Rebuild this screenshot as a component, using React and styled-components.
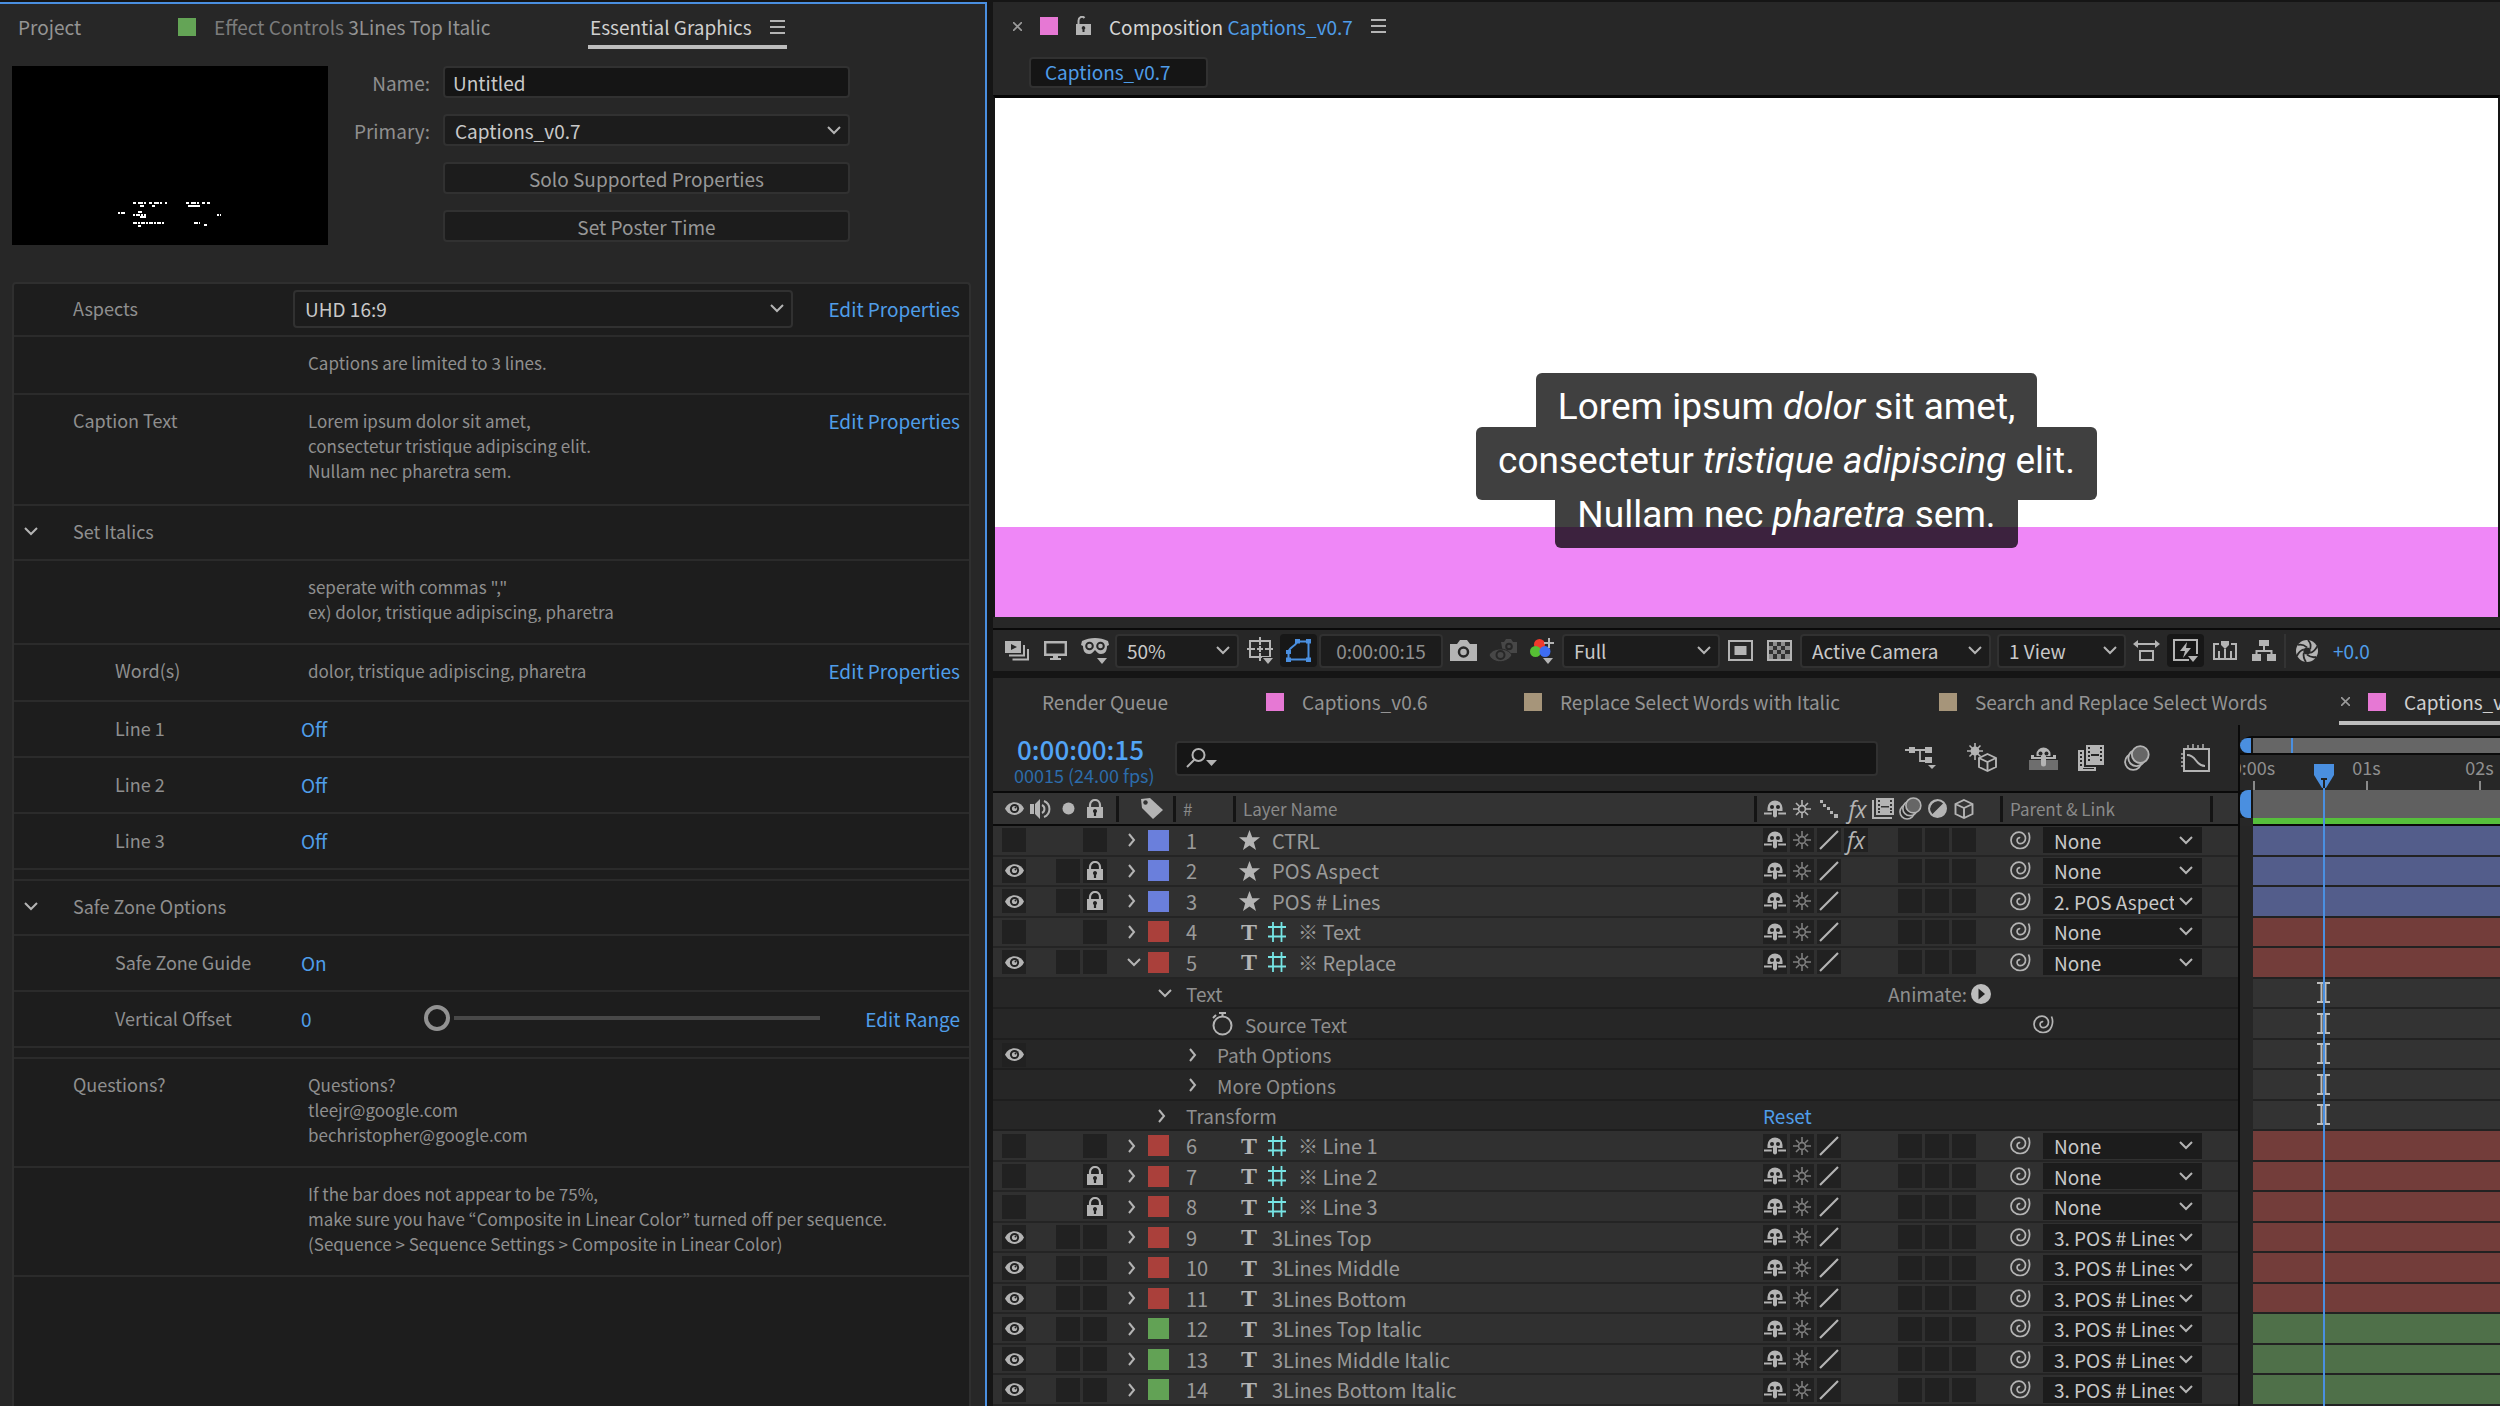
import React from "react";
import styled, { createGlobalStyle, css } from "styled-components";

const GlobalStyle = createGlobalStyle`
  * {
    box-sizing: border-box;
  }
  body {
    margin: 0;
    background: #151515;
    color: #8f8f8f;
    overflow: hidden;
  }
  body, button, input, select {
    font-family: "Noto Sans CJK JP", "Noto Sans", sans-serif;
    font-size: 19px;
    line-height: 25px;
  }
  button {
    padding: 0;
    border: 0;
    background: none;
    color: inherit;
    cursor: pointer;
  }
  svg {
    display: block;
    flex: none;
  }
`;

/* ---------- layout ---------- */

const Workspace = styled.main`
  display: grid;
  grid-template-columns: minmax(0, 987fr) minmax(0, 1507fr);
  column-gap: 6px;
  height: 100vh;
  padding-top: 2px;
`;

const RightColumn = styled.div`
  display: grid;
  grid-template-columns: minmax(0, 1fr);
  grid-template-rows: minmax(0, 669fr) minmax(0, 728fr);
  row-gap: 7px;
  min-width: 0;
  min-height: 0;
`;

const LeftPanel = styled.section`
  display: flex;
  flex-direction: column;
  min-height: 0;
  background: #272727;
  border-top: 2px solid #4a8fe0;
  border-right: 2px solid #4a8fe0;
`;

const Panel = styled.section`
  display: flex;
  flex-direction: column;
  min-width: 0;
  min-height: 0;
  background: #272727;
`;

/* ---------- shared bits ---------- */

const TabBar = styled.div`
  display: grid;
  grid-template-columns: ${({ $columns }) => $columns};
  flex: none;
  height: ${({ $height }) => $height}px;
  padding-left: ${({ $indent }) => $indent}px;
  overflow: hidden;
`;

const Tab = styled.button`
  display: flex;
  align-items: center;
  justify-self: start;
  gap: 18px;
  padding: ${({ $active }) => ($active ? "0 2px" : "0")};
  white-space: nowrap;
  color: ${({ $active }) => ($active ? "#d0d0d0" : "#949494")};
  box-shadow: ${({ $active }) => ($active ? "inset 0 -4px 0 #bdbdbd" : "none")};

  em {
    font-style: normal;
    color: #7c7c7c;
  }
`;

const Swatch = styled.span`
  flex: none;
  width: 18px;
  height: 18px;
  background: ${({ $color }) => $color};
`;

const LinkButton = styled.button`
  color: #4f9de9;
  white-space: nowrap;
`;

const boxed = css`
  background: #1c1c1c;
  border: 2px solid #313131;
  border-radius: 4px;
`;

const SelectWrap = styled.span`
  display: grid;
  align-items: center;
  width: ${({ $width }) => ($width ? `${$width}px` : "100%")};
  height: ${({ $height }) => $height || 34}px;
  color: #c9c9c9;

  select,
  svg {
    grid-area: 1 / 1;
  }
  svg {
    justify-self: end;
    margin-right: 9px;
    pointer-events: none;
  }
`;

const SelectBox = styled.select`
  appearance: none;
  width: 100%;
  height: 100%;
  padding: 0 28px 0 10px;
  color: #c9c9c9;
  ${boxed}
  ${({ $flat }) =>
    $flat &&
    css`
      border: 0;
      border-radius: 0;
      padding-left: 11px;
    `}
`;

const Select = ({ value, label, id, width, height, flat }) => (
  <SelectWrap $width={width} $height={height}>
    <SelectBox id={id} aria-label={label} $flat={flat} defaultValue={value}>
      <option>{value}</option>
    </SelectBox>
    <ChevronDown />
  </SelectWrap>
);

/* ---------- icons ---------- */

const ICON = "#b4b4b4";

const ChevronDown = () => (
  <svg width="14" height="9" viewBox="0 0 14 9" fill="none" stroke={ICON} strokeWidth="2">
    <path d="M1 1l6 6 6-6" />
  </svg>
);

const ChevronRight = () => (
  <svg width="8" height="14" viewBox="0 0 8 14" fill="none" stroke={ICON} strokeWidth="2">
    <path d="M1 1l5 6-5 6" />
  </svg>
);

const MenuIcon = () => (
  <svg width="15" height="14" viewBox="0 0 15 14" fill={ICON}>
    <path d="M0 0h15v2H0zM0 6h15v2H0zM0 12h15v2H0z" />
  </svg>
);

const CloseIcon = () => (
  <svg width="9" height="9" viewBox="0 0 9 9" stroke="#9a9a9a" strokeWidth="1.6">
    <path d="M0 0l9 9M9 0L0 9" />
  </svg>
);

const UnlockIcon = () => (
  <svg width="15" height="20" viewBox="0 0 15 20">
    <path d="M2.5 9V5a3.5 4 0 0 1 6-3" fill="none" stroke={ICON} strokeWidth="2" />
    <path d="M0 8h15v11H0z" fill={ICON} />
    <path d="M7.5 10a2 2 0 0 1 1 3.6V16h-2v-2.4a2 2 0 0 1 1-3.600z" fill="#272727" />
  </svg>
);

const LockIcon = () => (
  <svg width="16" height="20" viewBox="0 0 16 20">
    <path d="M3 9V6a5 5 0 0 1 10 0v3" fill="none" stroke={ICON} strokeWidth="2.2" />
    <path d="M0 8h16v11H0z" fill={ICON} />
    <path d="M8 10a2.2 2.2 0 0 1 1.1 4V17H6.9v-3A2.2 2.2 0 0 1 8 10z" fill="#222" />
  </svg>
);

const EyeIcon = () => (
  <svg width="19" height="13" viewBox="0 0 19 13">
    <path d="M0 6.5C4-2 15-2 19 6.500 15 15 4 15 0 6.500z" fill={ICON} />
    <circle cx="9.5" cy="6.5" r="4.6" fill="#222" />
    <circle cx="9.5" cy="6.5" r="2.6" fill={ICON} />
    <circle cx="10.5" cy="5.5" r="1" fill="#222" />
  </svg>
);

const SpeakerIcon = () => (
  <svg width="22" height="20" viewBox="0 0 22 20" fill="none" stroke={ICON} strokeWidth="2">
    <path d="M0 5h4v10H0zM5 5l5-5v20l-5-5z" fill={ICON} stroke="none" />
    <path d="M12 6a4.500 4.500 0 0 1 0 8M14 2a8.600 8.600 0 0 1 0 16" />
  </svg>
);

const DotIcon = () => (
  <svg width="13" height="13" viewBox="0 0 13 13">
    <circle cx="6.5" cy="6.5" r="6" fill={ICON} />
  </svg>
);

const TagIcon = () => (
  <svg width="22" height="21" viewBox="0 0 22 21">
    <path d="M0 1l9-1 13 12-10 9L1 10z" fill={ICON} />
    <circle cx="4.5" cy="4.5" r="2.2" fill="#333" />
  </svg>
);

const ShyIcon = () => (
  <svg width="22" height="18" viewBox="0 0 22 18">
    <path d="M3.5 11V8a7.5 7.5 0 0 1 15 0v3z" fill={ICON} />
    <circle cx="8" cy="7" r="2" fill="#222" />
    <circle cx="14" cy="7" r="2" fill="#222" />
    <path d="M0 12.500h8v2H0zM14 12.500h8v2h-8z" fill={ICON} />
    <path d="M9 9h4v6.500a2 2 0 0 1-4 0z" fill={ICON} />
    <path d="M8.300 10.500v5M13.700 10.500v5" stroke="#222" />
  </svg>
);

const SunIcon = ({ dim }) => (
  <svg width="18" height="18" viewBox="0 0 18 18" fill="none" stroke={dim ? "#7d7d7d" : ICON} strokeWidth="1.6">
    <circle cx="9" cy="9" r="3.4" />
    <path d="M9 0v5M9 13v5M0 9h5M13 9h5M3 3l3 3M12 12l3 3M15 3l-3 3M6 12l-3 3" />
  </svg>
);

const StairIcon = () => (
  <svg width="18" height="18" viewBox="0 0 18 18" fill={ICON}>
    <path d="M0 0h3v3H0zM3 4h3v3H3zM7 7h3v3H7zM10 11h3v3h-3zM14 14h4v4h-4z" />
  </svg>
);

const SlashIcon = () => (
  <svg width="20" height="20" viewBox="0 0 20 20" stroke={ICON} strokeWidth="2.2">
    <path d="M1 19L19 1" />
  </svg>
);

const FilmIcon = () => (
  <svg width="22" height="21" viewBox="0 0 22 21">
    <path d="M4 0h18v17H4z" fill={ICON} />
    <path d="M1 2v18h19" fill="none" stroke={ICON} strokeWidth="2" />
    <path
      d="M6 2h2v2H6zM6 6h2v2H6zM6 10h2v2H6zM6 13h2v2H6zM18 2h2v2h-2zM18 6h2v2h-2zM18 10h2v2h-2zM18 13h2v2h-2zM9 8h8v1.500H9z"
      fill="#333"
    />
  </svg>
);

const FrameBlendIcon = () => (
  <svg width="26" height="26" viewBox="0 0 26 26">
    <path d="M8 0h18v20H8z" fill={ICON} />
    <path d="M0 5h6v17h12v4H0z" fill={ICON} />
    <path
      d="M10 2h2v2h-2zM10 6h2v2h-2zM10 10h2v2h-2zM10 14h2v2h-2zM22 2h2v2h-2zM22 6h2v2h-2zM22 10h2v2h-2zM22 14h2v2h-2zM13 9h8v2h-8z"
      fill="#272727"
    />
    <path d="M2 7h2v2H2zM2 11h2v2H2zM2 15h2v2H2zM2 19h2v2H2zM5 23h11v1H5z" fill="#272727" />
  </svg>
);

const BlurIcon = ({ size = 23 }) => (
  <svg width={size} height={size} viewBox="0 0 24 24" fill="#2a2a2a" stroke={ICON} strokeWidth="1.7">
    <circle cx="8.500" cy="15.500" r="7.500" />
    <circle cx="11.500" cy="12" r="7.500" />
    <circle cx="15" cy="8.800" r="7.800" fill="#666" />
  </svg>
);

const AdjustIcon = () => (
  <svg width="19" height="19" viewBox="0 0 19 19">
    <circle cx="9.5" cy="9.5" r="8.5" fill={ICON} />
    <path d="M16 3.500A9 9 0 0 0 3.500 16z" fill="#333" />
    <circle cx="9.5" cy="9.5" r="8.5" fill="none" stroke={ICON} strokeWidth="2" />
  </svg>
);

const CubeIcon = () => (
  <svg width="20" height="20" viewBox="0 0 20 20" fill="none" stroke={ICON} strokeWidth="1.9">
    <path d="M10 1l8.500 4v10L10 19l-8.500-4V5zM1.500 5l8.500 4 8.500-4M10 9v10" />
  </svg>
);

const StarIcon = () => (
  <svg width="21" height="20" viewBox="0 0 21 20" fill={ICON}>
    <path d="M10.500 0l2.700 7.300H21l-6.200 4.900L17 20l-6.500-4.600L4 20l2.200-7.800L0 7.300h7.800z" />
  </svg>
);

const GridHashIcon = () => (
  <svg width="18" height="20" viewBox="0 0 18 20" stroke="#76e4e4" strokeWidth="1.8">
    <path d="M5 0v20M13.500 0v20M0 5h18M0 14.500h18" />
  </svg>
);

const SpiralIcon = () => (
  <svg width="21" height="19" viewBox="0 0 21 19" fill="none" stroke={ICON} strokeWidth="1.7">
    <path d="M18.500 1.500C21 7 19 17.600 10 17.500 4.500 17.400 1 13.500 1 9.300 1 4.500 5 1.200 9 1.200c4 0 6.500 2.900 6.500 6.100 0 3.200-2.500 5.400-5 5.400S6.800 10.700 7.200 8.600C7.600 7 9 6.400 10.200 6.900" />
  </svg>
);

const StopwatchIcon = () => (
  <svg width="21" height="24" viewBox="0 0 21 24" fill="none" stroke={ICON} strokeWidth="2">
    <circle cx="10.5" cy="13.5" r="9" />
    <path d="M7 1h7M10.500 1v3M1 6l3-3" />
  </svg>
);

const PlayCircleIcon = () => (
  <svg width="20" height="20" viewBox="0 0 20 20">
    <circle cx="10" cy="10" r="10" fill="#bdbdbd" />
    <path d="M7.500 4.500l6.500 5.500-6.500 5.500z" fill="#222" />
  </svg>
);

const IBeamIcon = () => (
  <svg width="13" height="21" viewBox="0 0 13 21" stroke="#bdbdbd" strokeWidth="2" fill="none">
    <path d="M0 1h13M0 20h13M4.500 1v19M8.500 1v19" />
  </svg>
);

const SearchIcon = () => (
  <svg width="31" height="20" viewBox="0 0 31 20" fill="none" stroke={ICON} strokeWidth="2">
    <circle cx="12.5" cy="7" r="6" />
    <path d="M8.500 11.500L1 19" />
    <path d="M20 12h11l-5.500 6z" fill={ICON} stroke="none" />
  </svg>
);

const PreviewIcon = () => (
  <svg width="24" height="20" viewBox="0 0 24 20">
    <path d="M0 0h16v12H0z" fill={ICON} />
    <path d="M6 3l6 3-6 3z" fill="#272727" />
    <path d="M4 14.500h15V4M7.500 18.500H23V8" fill="none" stroke={ICON} strokeWidth="2" />
  </svg>
);

const MonitorIcon = () => (
  <svg width="23" height="20" viewBox="0 0 23 20">
    <path d="M1.200 1.200h20.600v12.600H1.200z" fill="none" stroke={ICON} strokeWidth="2.4" />
    <path d="M9 15h5v2h3v2H6v-2h3z" fill={ICON} />
  </svg>
);

const GogglesIcon = () => (
  <svg width="28" height="26" viewBox="0 0 28 26">
    <path d="M1 3C9-1 19-1 27 3l1 4-2 1c0 5-2 8-6 8-3 0-4-2-6-4-2 2-3 4-6 4-4 0-6-3-6-8L0 7z" fill={ICON} />
    <circle cx="8.5" cy="8" r="3.3" fill="none" stroke="#272727" strokeWidth="2" />
    <circle cx="19.5" cy="8" r="3.3" fill="none" stroke="#272727" strokeWidth="2" />
    <path d="M16 20h10l-5 6z" fill={ICON} />
  </svg>
);

const GuideIcon = () => (
  <svg width="26" height="27" viewBox="0 0 26 27">
    <path d="M3 4h20v16H3zM13 0v8M13 16v8M0 12h8M18 12h8M10 12h6M13 9v6" fill="none" stroke={ICON} strokeWidth="2" />
    <path d="M15 20h12v7H15z" fill="#272727" />
    <path d="M16 21h10l-5 6z" fill={ICON} />
  </svg>
);

const MaskPathIcon = () => (
  <svg width="25" height="23" viewBox="0 0 25 23" stroke="#4a8fe0" fill="#4a8fe0">
    <path d="M2.500 20.500V13c0-4 6-5 9-10.500h11v18z" fill="none" strokeWidth="2" />
    <path d="M0 11h5v4H0zM0 18.500h5V23H0zM20 18.500h5V23h-5zM20 0h5v4.500h-5zM9 0h5v4.500H9z" stroke="none" />
  </svg>
);

const CameraIcon = () => (
  <svg width="27" height="21" viewBox="0 0 27 21">
    <path d="M0 4h7l3-4h7l3 4h7v17H0z" fill={ICON} />
    <circle cx="13.5" cy="12" r="4.5" fill={ICON} stroke="#272727" strokeWidth="2.5" />
  </svg>
);

const SnapshotIcon = () => (
  <svg width="28" height="24" viewBox="0 0 28 24">
    <path d="M12 3h3l2-3h5l2 3h4v11H14z" fill="#474747" />
    <circle cx="20" cy="7.5" r="2.8" fill="none" stroke="#272727" strokeWidth="2" />
    <path d="M0 16c4-8 18-8 23 0-5 9-19 9-23 0z" fill="#474747" stroke="#272727" strokeWidth="1" />
    <circle cx="11.5" cy="16" r="4" fill="none" stroke="#272727" strokeWidth="2" />
  </svg>
);

const ChannelsIcon = () => (
  <svg width="24" height="26" viewBox="0 0 24 26">
    <circle cx="9.5" cy="6.5" r="5.5" fill="#f03a2c" />
    <circle cx="5.5" cy="13.5" r="5.5" fill="#56bf34" />
    <circle cx="15" cy="13.5" r="5.5" fill="#3d6cf2" />
    <path d="M19 0v10M14 5h10" stroke={ICON} strokeWidth="2" />
    <path d="M13 20h10l-5 6z" fill={ICON} />
  </svg>
);

const RegionIcon = () => (
  <svg width="25" height="21" viewBox="0 0 25 21">
    <path d="M1 1h23v19H1z" fill="none" stroke={ICON} strokeWidth="2" />
    <path d="M6.500 6h12v9h-12z" fill={ICON} />
  </svg>
);

const CheckerIcon = () => (
  <svg width="25" height="21" viewBox="0 0 25 21">
    <path d="M1 1h23v19H1z" fill="#303030" stroke={ICON} strokeWidth="2" />
    <path
      d="M6 2h4v4H6zM14 2h4v4h-4zM2 6h4v4H2zM10 6h4v4h-4zM18 6h5v4h-5zM6 10h4v4H6zM14 10h4v4h-4zM2 14h4v5H2zM10 14h4v5h-4zM18 14h5v5h-5z"
      fill="#8c8c8c"
    />
  </svg>
);

const PixelAspectIcon = () => (
  <svg width="27" height="21" viewBox="0 0 27 21">
    <path d="M7 11h13v9H7zM3 4h21" fill="none" stroke={ICON} strokeWidth="2" />
    <path d="M0 4l5-4v8zM27 4l-5-4v8z" fill={ICON} />
  </svg>
);

const FastPreviewIcon = () => (
  <svg width="25" height="23" viewBox="0 0 25 23">
    <path d="M16 21H1V1h23v14" fill="none" stroke={ICON} strokeWidth="2" />
    <path d="M14 3l-7 9h5l-2 7 8-10h-5z" fill={ICON} />
    <path d="M15 17h10l-5 6z" fill={ICON} />
  </svg>
);

const TimelineIcon = () => (
  <svg width="24" height="19" viewBox="0 0 24 19">
    <path d="M6 3H1v15h22V3h-5M6 10v8M12 8v10M18 10v8" fill="none" stroke={ICON} strokeWidth="2" />
    <path d="M8 0h8v4l-4 4-4-4z" fill={ICON} />
  </svg>
);

const FlowchartIcon = () => (
  <svg width="24" height="21" viewBox="0 0 24 21">
    <path d="M7 0h10v6H7zM0 14h9v7H0zM15 14h9v7h-9z" fill={ICON} />
    <path d="M12 6v5M4.500 15v-4h15v4" fill="none" stroke={ICON} strokeWidth="2" />
  </svg>
);

const ApertureIcon = () => (
  <svg width="24" height="24" viewBox="0 0 24 24">
    <circle cx="12" cy="12" r="11" fill={ICON} />
    <circle cx="12" cy="12" r="3.6" fill="#272727" />
    <path
      d="M12 8.400C9 6 7 5 3 6M15.200 10.300C16 6.500 16 4.500 13 1M15.200 13.800c3.500-1 5-2.500 7-6.500M12 15.600c3 2.500 5 3.300 9 2.400M8.800 13.800C8 17.500 8.500 19.500 11 23M8.800 10.300C5.500 11.200 4 12.500 1.800 17"
      fill="none"
      stroke="#272727"
      strokeWidth="1.8"
    />
  </svg>
);

const MiniFlowIcon = () => (
  <svg width="31" height="22" viewBox="0 0 31 22">
    <path d="M0 3h20M15 3v11h6" fill="none" stroke={ICON} strokeWidth="1.8" />
    <path d="M4 0h6v6H4zM20 0h7v6h-7zM20 10h7v6h-7zM23 18h8l-4 4z" fill={ICON} />
  </svg>
);

const DraftIcon = () => (
  <svg width="30" height="30" viewBox="0 0 30 30" fill="none" stroke={ICON} strokeWidth="1.9">
    <circle cx="8" cy="8" r="3.5" fill={ICON} />
    <path d="M8 0v17M0 8h16M2.500 2.500l11 11M13.500 2.500l-11 11" strokeWidth="1.6" />
    <path d="M20.500 11l8.500 4v9l-8.500 4-8.500-4v-9z" fill="#272727" />
    <path d="M12 15l8.500 4 8.500-4M20.500 19v9" />
  </svg>
);

const HideShyIcon = () => (
  <svg width="29" height="23" viewBox="0 0 29 23">
    <path d="M0 13h29v10H0z" fill="#6e6e6e" />
    <path d="M7.500 9V7a7 6.500 0 0 1 14 0v2zM2 8h3v2h19V8h3v4H2zM12 8h5v9a2.500 2.500 0 0 1-5 0z" fill={ICON} />
    <circle cx="11.500" cy="6.5" r="2" fill="#272727" />
    <circle cx="17.500" cy="6.5" r="2" fill="#272727" />
  </svg>
);

const GraphIcon = () => (
  <svg width="29" height="28" viewBox="0 0 29 28" fill="none" stroke={ICON} strokeWidth="2">
    <path d="M3 5h25v22H3zM6 11c10 0 8 11 18 11" />
    <path d="M7 1v4M12 0v5M17 1v4M22 0v5M0 10h3M0 14h3M0 18h3M0 22h3" strokeWidth="1.5" />
  </svg>
);

/* ---------- essential graphics ---------- */

const TemplateHead = styled.div`
  display: flex;
  flex: none;
  padding: 17px 12px 37px;
`;

const Thumbnail = styled.svg`
  width: 316px;
  height: 179px;
  background: #000;
`;

const TemplateForm = styled.div`
  display: grid;
  grid-template-columns: 102px 407px;
  column-gap: 13px;
  row-gap: 16px;
  align-content: start;
  align-items: center;

  label {
    text-align: right;
  }
`;

const TextInput = styled.input`
  height: 32px;
  padding: 0 8px;
  color: #c9c9c9;
  ${boxed}
  background: #151515;
`;

const FormButton = styled.button`
  grid-column: 2;
  height: 32px;
  color: #979797;
  ${boxed}
`;

const PropertyList = styled.div`
  flex: 1;
  min-height: 0;
  margin: 0 14px 0 12px;
  border: 2px solid #2f2f2f;
  border-bottom: 0;
  border-radius: 4px 4px 0 0;
  background: #1d1d1d;
  overflow: hidden;
`;

const Property = styled.div`
  display: grid;
  grid-template-columns: ${({ $nested }) => ($nested ? "101px 178px" : "59px 220px")} minmax(0, 1fr) auto;
  align-items: ${({ $top }) => ($top ? "start" : "center")};
  min-height: ${({ $height }) => $height}px;
  padding: ${({ $top }) => ($top ? "13px 9px 12px 0" : "0 9px 2px 0")};
  border-bottom: 2px solid #2b2b2b;
`;

const PropertyToggle = styled.button`
  display: flex;
  padding-left: 10px;
`;

const PropertyLabel = styled.label`
  grid-column: 2;
  font-size: 18px;
`;

const PropertyValue = styled.div`
  grid-column: 3;
  display: flex;
  align-items: center;
  padding-left: ${({ $inset }) => $inset}px;
  font-size: 17px;
  white-space: pre-line;
`;

const PropertyAction = styled(LinkButton)`
  grid-column: 4;
`;

const GroupGap = styled.div`
  height: 11px;
  border-bottom: 2px solid #2b2b2b;
`;

const Slider = styled.input`
  appearance: none;
  flex: 1;
  min-width: 0;
  height: 28px;
  margin: 0 45px 0 112px;
  background: linear-gradient(#484848, #484848) 30px 50% / 100% 4px no-repeat;

  &::-webkit-slider-thumb {
    appearance: none;
    width: 26px;
    height: 26px;
    border: 4px solid #929292;
    border-radius: 50%;
    background: #1d1d1d;
  }
`;

const TextProperty = ({ label, text, height, nested, editable }) => (
  <Property $top $height={height} $nested={nested}>
    {label && <PropertyLabel as="span">{label}</PropertyLabel>}
    <PropertyValue $inset={15}>{text}</PropertyValue>
    {editable && <PropertyAction>Edit Properties</PropertyAction>}
  </Property>
);

const GroupProperty = ({ label }) => (
  <Property $height={55}>
    <PropertyToggle aria-label={label}>
      <ChevronDown />
    </PropertyToggle>
    <PropertyLabel as="span">{label}</PropertyLabel>
  </Property>
);

const SwitchProperty = ({ label, value }) => (
  <Property $height={56} $nested>
    <PropertyLabel as="span">{label}</PropertyLabel>
    <PropertyValue $inset={8}>
      <LinkButton aria-label={label}>{value}</LinkButton>
    </PropertyValue>
  </Property>
);

const EssentialGraphics = () => (
  <LeftPanel>
    <TabBar $height={45} $indent={18} $columns="160px 410px auto">
      <Tab>Project</Tab>
      <Tab>
        <Swatch $color="#64a456" />
        <span>
          <em>Effect Controls</em> 3Lines Top Italic
        </span>
      </Tab>
      <Tab $active>
        Essential Graphics
        <MenuIcon />
      </Tab>
    </TabBar>
    <TemplateHead>
      <Thumbnail viewBox="0 0 316 179" stroke="#fff" strokeWidth="2">
        <path d="M121 137h34M174 137h24" strokeDasharray="3 2 5 1 2 3" />
        <path d="M128 140h4M140 140h3M176 140h12" />
        <path d="M106 147h8M121 149h13M205 149h4" strokeDasharray="2 1 4 1" />
        <path d="M126 146h4M128 151h6" />
        <path d="M121 157h32M182 157h6M192 159h3" strokeDasharray="4 1 2 1" />
        <path d="M126 160h3" />
      </Thumbnail>
      <TemplateForm>
        <label htmlFor="template-name">Name:</label>
        <TextInput id="template-name" defaultValue="Untitled" />
        <label htmlFor="template-primary">Primary:</label>
        <Select id="template-primary" value="Captions_v0.7" height={32} />
        <FormButton>Solo Supported Properties</FormButton>
        <FormButton>Set Poster Time</FormButton>
      </TemplateForm>
    </TemplateHead>
    <PropertyList>
      <Property $height={53}>
        <PropertyLabel htmlFor="aspects">Aspects</PropertyLabel>
        <PropertyValue $inset={0}>
          <Select id="aspects" value="UHD 16:9" width={500} height={38} />
        </PropertyValue>
        <PropertyAction>Edit Properties</PropertyAction>
      </Property>
      <TextProperty text="Captions are limited to 3 lines." height={58} />
      <TextProperty
        label="Caption Text"
        text={"Lorem ipsum dolor sit amet,\nconsectetur tristique adipiscing elit.\nNullam nec pharetra sem."}
        height={111}
        editable
      />
      <GroupProperty label="Set Italics" />
      <TextProperty text={'seperate with commas ","\nex) dolor, tristique adipiscing, pharetra'} height={84} />
      <TextProperty label="Word(s)" text="dolor, tristique adipiscing, pharetra" height={57} nested editable />
      <SwitchProperty label="Line 1" value="Off" />
      <SwitchProperty label="Line 2" value="Off" />
      <SwitchProperty label="Line 3" value="Off" />
      <GroupGap />
      <GroupProperty label="Safe Zone Options" />
      <SwitchProperty label="Safe Zone Guide" value="On" />
      <Property $height={56} $nested>
        <PropertyLabel htmlFor="vertical-offset">Vertical Offset</PropertyLabel>
        <PropertyValue $inset={8}>
          <LinkButton>0</LinkButton>
          <Slider id="vertical-offset" type="range" min="0" max="100" defaultValue="0" />
        </PropertyValue>
        <PropertyAction>Edit Range</PropertyAction>
      </Property>
      <GroupGap />
      <TextProperty
        label="Questions?"
        text={"Questions?\ntleejr@google.com\nbechristopher@google.com"}
        height={109}
      />
      <TextProperty
        text={
          "If the bar does not appear to be 75%,\nmake sure you have “Composite in Linear Color” turned off per sequence.\n(Sequence > Sequence Settings > Composite in Linear Color)"
        }
        height={109}
      />
    </PropertyList>
  </LeftPanel>
);

/* ---------- composition viewer ---------- */

const ViewerHead = styled.header`
  display: flex;
  align-items: center;
  gap: 18px;
  flex: none;
  height: 50px;
  padding: 0 0 2px 20px;
  color: #d6d6d6;

  span span {
    color: #4f9de9;
  }
`;

const Breadcrumb = styled.button`
  flex: none;
  width: 179px;
  height: 31px;
  margin: 5px 0 7px 36px;
  padding: 0 0 2px 14px;
  text-align: left;
  color: #4f9de9;
  ${boxed}
  background: #151515;
`;

const Stage = styled.div`
  display: grid;
  flex: 1;
  min-height: 0;
  border-top: 3px solid #050505;
  border-right: 2px solid #151515;
  border-left: 2px solid #151515;
  background: #fff;
`;

const SafeZone = styled.div`
  grid-area: 1 / 1;
  align-self: end;
  height: 90px;
  background: #ef87f7;
`;

const Captions = styled.div`
  grid-area: 1 / 1;
  align-self: end;
  display: flex;
  flex-direction: column;
  align-items: center;
  padding: 0 0 69px 80px;
  font-family: Roboto, "Liberation Sans", sans-serif;
  font-size: 37px;
  line-height: 30px;
  color: #fff;
`;

const CaptionLine = styled.p`
  margin: 0;
  padding: ${({ $pad }) => $pad};
  border-radius: ${({ $radius }) => $radius};
  background: rgba(0, 0, 0, 0.75);
`;

const ViewerBar = styled.div`
  display: flex;
  align-items: center;
  gap: 2px;
  flex: none;
  height: 43px;
  margin-top: 11px;
  padding: 0 5px;
  border-top: 2px solid #0a0a0a;
`;

const ToolButton = styled.button`
  display: flex;
  align-items: center;
  justify-content: center;
  width: 37px;
  height: 33px;
  border-radius: 4px;
  background: ${({ $active }) => ($active ? "#171717" : "none")};
`;

const TimeField = styled.button`
  width: 124px;
  height: 34px;
  ${boxed}
`;

const ViewSelects = styled.div`
  display: flex;
  gap: 6px;
`;

const BarDivider = styled.span`
  width: 2px;
  height: 34px;
  background: #333;
`;

const Exposure = styled(LinkButton)`
  margin-left: 6px;
`;

const CompositionViewer = () => (
  <Panel>
    <ViewerHead>
      <button aria-label="Close">
        <CloseIcon />
      </button>
      <Swatch $color="#e678d4" />
      <UnlockIcon />
      <span>
        Composition <span>Captions_v0.7</span>
      </span>
      <MenuIcon />
    </ViewerHead>
    <Breadcrumb>Captions_v0.7</Breadcrumb>
    <Stage>
      <SafeZone />
      <Captions>
        <CaptionLine $pad="19px 22px 5px" $radius="6px 6px 0 0">
          Lorem ipsum <i>dolor</i> sit amet,
        </CaptionLine>
        <CaptionLine $pad="19px 22px 24px" $radius="6px">
          consectetur <i>tristique adipiscing</i> elit.
        </CaptionLine>
        <CaptionLine $pad="0 22px 18px" $radius="0 0 6px 6px">
          Nullam nec <i>pharetra</i> sem.
        </CaptionLine>
      </Captions>
    </Stage>
    <ViewerBar>
      <ToolButton aria-label="Always preview"><PreviewIcon /></ToolButton>
      <ToolButton aria-label="Primary viewer"><MonitorIcon /></ToolButton>
      <ToolButton aria-label="Immersive display"><GogglesIcon /></ToolButton>
      <Select label="Magnification" value="50%" width={124} />
      <ToolButton aria-label="Grid and guides"><GuideIcon /></ToolButton>
      <ToolButton aria-label="Mask visibility" $active><MaskPathIcon /></ToolButton>
      <TimeField>0:00:00:15</TimeField>
      <ToolButton aria-label="Take snapshot"><CameraIcon /></ToolButton>
      <ToolButton aria-label="Show snapshot"><SnapshotIcon /></ToolButton>
      <ToolButton aria-label="Channels"><ChannelsIcon /></ToolButton>
      <Select label="Resolution" value="Full" width={158} />
      <ToolButton aria-label="Region of interest"><RegionIcon /></ToolButton>
      <ToolButton aria-label="Transparency grid"><CheckerIcon /></ToolButton>
      <ViewSelects>
        <Select label="3D view" value="Active Camera" width={191} />
        <Select label="View layout" value="1 View" width={129} />
      </ViewSelects>
      <ToolButton aria-label="Pixel aspect ratio"><PixelAspectIcon /></ToolButton>
      <ToolButton aria-label="Fast previews" $active><FastPreviewIcon /></ToolButton>
      <ToolButton aria-label="Timeline"><TimelineIcon /></ToolButton>
      <ToolButton aria-label="Flowchart"><FlowchartIcon /></ToolButton>
      <BarDivider />
      <ToolButton aria-label="Reset exposure"><ApertureIcon /></ToolButton>
      <Exposure>+0.0</Exposure>
    </ViewerBar>
  </Panel>
);

/* ---------- timeline ---------- */

const TimelineBody = styled.div`
  display: grid;
  grid-template-columns: minmax(0, 1fr) 260px;
  flex: 1;
  min-height: 0;
`;

const LayerPane = styled.div`
  display: flex;
  flex-direction: column;
  min-height: 0;
  border-right: 2px solid #0a0a0a;
`;

const LayerTools = styled.div`
  display: flex;
  align-items: center;
  flex: none;
  height: 66px;
  padding: 0 28px 0 21px;
`;

const Timecode = styled.div`
  flex: none;
  width: 161px;
  padding-top: 8px;
  line-height: 26px;

  strong {
    display: block;
    margin-left: 3px;
    font-size: 26px;
    font-weight: 500;
    color: #52a4f5;
  }
  small {
    display: block;
    font-size: 18px;
    color: #2c6cab;
  }
`;

const SearchField = styled.label`
  display: flex;
  align-items: center;
  flex: 1;
  min-width: 0;
  height: 35px;
  padding-left: 9px;
  ${boxed}
  background: #161616;

  input {
    flex: 1;
    min-width: 0;
    border: 0;
    outline: 0;
    background: none;
    color: #c9c9c9;
  }
`;

const LayerToolIcons = styled.div`
  display: flex;
  align-items: center;
  justify-content: space-between;
  width: 305px;
  margin-left: 27px;

  div {
    display: flex;
    align-items: center;
    gap: 20px;
  }
`;

const LayerTable = styled.table`
  display: flex;
  flex-direction: column;
  flex: 1;
  min-height: 0;

  thead {
    display: block;
  }
  tbody {
    display: grid;
    grid-auto-rows: minmax(0, 1fr);
    flex: 1;
    min-height: 0;
  }
`;

const HeadRow = styled.tr`
  display: grid;
  grid-template-columns: 114px 57px 60px minmax(0, 1fr) 246px 210px 28px;
  align-items: center;
  height: 35px;
  padding-left: 9px;
  background: #333;
  border-top: 2px solid #0a0a0a;
  border-bottom: 2px solid #0a0a0a;
`;

const HeadCell = styled.th`
  display: flex;
  align-items: center;
  height: 26px;
  padding: 0 0 0 ${({ $pad = 7 }) => $pad}px;
  border-left: ${({ $first }) => ($first ? "0" : "3px solid #141414")};
  font-size: 17px;
  font-weight: 400;
  color: #8a8a8a;
`;

const IconSlot = styled.span`
  display: flex;
  justify-content: center;
  flex: none;
  width: 27px;
  padding-right: ${({ $fx }) => ($fx ? 0 : 3)}px;
`;

const Fx = styled.i`
  font-family: "Open Sans", sans-serif;
  font-size: 23px;
  line-height: 22px;
  color: #b4b4b4;
`;

const LayerRow = styled.tr`
  display: grid;
  grid-template-columns: repeat(4, 27px) 38px 38px 53px minmax(0, 1fr) repeat(8, 27px) 64px 195px;
  align-items: center;
  padding-left: 9px;
  background: #303030;
  border-bottom: 2px solid #242424;
  color: #9a9a9a;
`;

const Cell = styled.td`
  display: flex;
  align-items: center;
  min-width: 0;
  padding: 0 0 0 ${({ $pad = 0 }) => $pad}px;
  font-size: ${({ $small }) => ($small ? 19 : 20)}px;
  white-space: nowrap;
`;

const SwitchBox = styled.button`
  display: flex;
  align-items: center;
  justify-content: center;
  width: 24px;
  height: 24px;
  background: #212121;
`;

const LabelColor = styled.span`
  width: 21px;
  height: 21px;
  background: ${({ $color }) => $color};
`;

const TypeGlyph = styled.span`
  width: 33px;
  color: #b4b4b4;

  b {
    padding-left: 2px;
    font-family: "Liberation Serif", serif;
    font-size: 24px;
  }
`;

const HashSlot = styled.span`
  width: 30px;
  margin-left: -4px;
`;

const PropRow = styled.tr`
  display: grid;
  grid-template-columns: 108px minmax(0, 1fr) 475px;
  align-items: center;
  padding: 2px 0 0 9px;
  background: #262626;
  border-bottom: 2px solid #1e1e1e;
`;

const PropIcon = styled.span`
  flex: none;
  width: ${({ $wide }) => ($wide ? 33 : 28)}px;
`;

const BLUE = "#6a7fdc";
const RED = "#aa403b";
const GREEN = "#62a255";
const TRACKS = { [BLUE]: "#535d8b", [RED]: "#733d3a", [GREEN]: "#4f7049" };

const layers = [
  { n: 1, name: "CTRL", color: BLUE, star: true, fx: true, hidden: true },
  { n: 2, name: "POS Aspect", color: BLUE, star: true, locked: true },
  { n: 3, name: "POS # Lines", color: BLUE, star: true, locked: true, parent: "2. POS Aspect" },
  { n: 4, name: "※ Text", color: RED, hash: true, hidden: true },
  {
    n: 5,
    name: "※ Replace",
    color: RED,
    hash: true,
    props: [
      { name: "Text", indent: 48, open: true, animate: true },
      { name: "Source Text", indent: 102, stopwatch: true },
      { name: "Path Options", indent: 79, eye: true },
      { name: "More Options", indent: 79 },
      { name: "Transform", indent: 48, reset: true },
    ],
  },
  { n: 6, name: "※ Line 1", color: RED, hash: true, hidden: true },
  { n: 7, name: "※ Line 2", color: RED, hash: true, hidden: true, locked: true },
  { n: 8, name: "※ Line 3", color: RED, hash: true, hidden: true, locked: true },
  { n: 9, name: "3Lines Top", color: RED, parent: "3. POS # Lines" },
  { n: 10, name: "3Lines Middle", color: RED, parent: "3. POS # Lines" },
  { n: 11, name: "3Lines Bottom", color: RED, parent: "3. POS # Lines" },
  { n: 12, name: "3Lines Top Italic", color: GREEN, parent: "3. POS # Lines" },
  { n: 13, name: "3Lines Middle Italic", color: GREEN, parent: "3. POS # Lines" },
  { n: 14, name: "3Lines Bottom Italic", color: GREEN, parent: "3. POS # Lines" },
];

const Layer = ({ layer }) => (
  <LayerRow>
    <Cell>
      <SwitchBox aria-label="Visible">{!layer.hidden && <EyeIcon />}</SwitchBox>
    </Cell>
    <Cell />
    <Cell>{!layer.hidden && <SwitchBox aria-label="Solo" />}</Cell>
    <Cell>
      <SwitchBox aria-label="Lock">{layer.locked && <LockIcon />}</SwitchBox>
    </Cell>
    <Cell $pad={layer.props ? 17 : 18}>
      <button aria-label="Expand layer">{layer.props ? <ChevronDown /> : <ChevronRight />}</button>
    </Cell>
    <Cell>
      <LabelColor $color={layer.color} />
    </Cell>
    <Cell>{layer.n}</Cell>
    <Cell>
      <TypeGlyph>{layer.star ? <StarIcon /> : <b>T</b>}</TypeGlyph>
      {layer.hash && (
        <HashSlot>
          <GridHashIcon />
        </HashSlot>
      )}
      {layer.name}
    </Cell>
    <Cell>
      <SwitchBox aria-label="Shy"><ShyIcon /></SwitchBox>
    </Cell>
    <Cell>
      <SwitchBox aria-label="Collapse"><SunIcon dim /></SwitchBox>
    </Cell>
    <Cell>
      <SwitchBox aria-label="Quality"><SlashIcon /></SwitchBox>
    </Cell>
    <Cell>
      {layer.fx && (
        <SwitchBox aria-label="Effects">
          <Fx>fx</Fx>
        </SwitchBox>
      )}
    </Cell>
    <Cell />
    <Cell><SwitchBox aria-label="Motion blur" /></Cell>
    <Cell><SwitchBox aria-label="Adjustment layer" /></Cell>
    <Cell><SwitchBox aria-label="3D layer" /></Cell>
    <Cell $pad={31}>
      <SpiralIcon />
    </Cell>
    <Cell>
      <Select flat label="Parent" value={layer.parent || "None"} width={159} height={26} />
    </Cell>
  </LayerRow>
);

const LayerProp = ({ prop }) => (
  <PropRow>
    <Cell>
      {prop.eye && (
        <SwitchBox aria-label="Visible">
          <EyeIcon />
        </SwitchBox>
      )}
    </Cell>
    <Cell $small $pad={prop.indent}>
      <PropIcon $wide={prop.stopwatch}>
        {prop.stopwatch ? <StopwatchIcon /> : prop.open ? <ChevronDown /> : <ChevronRight />}
      </PropIcon>
      {prop.name}
    </Cell>
    <Cell $small $pad={prop.animate ? 125 : prop.stopwatch ? 270 : 0}>
      {prop.animate && (
        <>
          Animate:&nbsp;
          <button aria-label="Animate">
            <PlayCircleIcon />
          </button>
        </>
      )}
      {prop.stopwatch && <SpiralIcon />}
      {prop.reset && <LinkButton>Reset</LinkButton>}
    </Cell>
  </PropRow>
);

const TrackPane = styled.div`
  position: relative;
  display: flex;
  flex-direction: column;
  min-width: 0;
  min-height: 0;
  padding-top: 11px;
  overflow: hidden;
`;

const Navigator = styled.div`
  display: flex;
  gap: 2px;
  flex: none;
  height: 19px;
  border: 2px solid #0a0a0a;
  border-width: 2px 0;
  border-radius: 12px 0 0 0;
  background: #151515;
`;

const Handle = styled.span`
  width: 11px;
  border-radius: 8px 0 0 8px;
  background: #4a8fe0;
`;

const NavigatorBar = styled.span`
  flex: 1;
  padding-left: 38px;
  background: #666;

  &::before {
    content: "";
    display: block;
    width: 2px;
    height: 100%;
    background: #4a8fe0;
  }
`;

const Ruler = styled.div`
  display: flex;
  flex: none;
  height: 35px;
  margin-left: -43px;
`;

const RulerMark = styled.span`
  display: flex;
  flex: none;
  flex-direction: column;
  align-items: center;
  justify-content: space-between;
  width: 113px;
  font-size: 18px;

  &::after {
    content: "";
    width: 2px;
    height: 9px;
    background: #8a8a8a;
  }
`;

const WorkArea = styled.div`
  display: flex;
  gap: 2px;
  flex: none;
  height: 28px;
  background: #151515;

  &::after {
    content: "";
    flex: 1;
    background: #606060;
  }
`;

const CacheBar = styled.div`
  flex: none;
  height: 8px;
  margin-left: 13px;
  background: #56bf3c;
  border-bottom: 2px solid #0a0a0a;
`;

const Tracks = styled.div`
  display: grid;
  grid-auto-rows: minmax(0, 1fr);
  flex: 1;
  min-height: 0;
  padding-left: 13px;
  background: #262626;
`;

const Track = styled.div`
  display: flex;
  align-items: center;
  padding-left: 64px;
  background: ${({ $color }) => $color || "#333"};
  border-bottom: 2px solid #222;
`;

const Playhead = styled.div`
  position: absolute;
  top: 39px;
  bottom: 0;
  left: 73px;
  display: flex;
  flex-direction: column;
  align-items: center;
  width: 21px;

  &::after {
    content: "";
    flex: 1;
    width: 2px;
    background: #4a8fe0;
  }
`;

const Timeline = () => (
  <Panel>
    <TabBar $height={47} $indent={49} $columns="224px 258px 415px 400px auto">
      <Tab>Render Queue</Tab>
      <Tab>
        <Swatch $color="#e678d4" />
        Captions_v0.6
      </Tab>
      <Tab>
        <Swatch $color="#a6957a" />
        Replace Select Words with Italic
      </Tab>
      <Tab>
        <Swatch $color="#a6957a" />
        Search and Replace Select Words
      </Tab>
      <Tab $active>
        <CloseIcon />
        <Swatch $color="#e678d4" />
        Captions_v0.7
      </Tab>
    </TabBar>
    <TimelineBody>
      <LayerPane>
        <LayerTools>
          <Timecode>
            <strong>0:00:00:15</strong>
            <small>00015 (24.00 fps)</small>
          </Timecode>
          <SearchField>
            <SearchIcon />
            <input type="search" aria-label="Search layers" />
          </SearchField>
          <LayerToolIcons>
            <button aria-label="Mini-flowchart"><MiniFlowIcon /></button>
            <button aria-label="Draft 3D"><DraftIcon /></button>
            <div>
              <button aria-label="Hide shy layers"><HideShyIcon /></button>
              <button aria-label="Frame blending"><FrameBlendIcon /></button>
              <button aria-label="Motion blur"><BlurIcon size={26} /></button>
            </div>
            <button aria-label="Graph editor"><GraphIcon /></button>
          </LayerToolIcons>
        </LayerTools>
        <LayerTable>
          <thead>
            <HeadRow>
              <HeadCell $first $pad={0}>
                <IconSlot><EyeIcon /></IconSlot>
                <IconSlot><SpeakerIcon /></IconSlot>
                <IconSlot><DotIcon /></IconSlot>
                <IconSlot><LockIcon /></IconSlot>
              </HeadCell>
              <HeadCell $pad={22}><TagIcon /></HeadCell>
              <HeadCell>#</HeadCell>
              <HeadCell>Layer Name</HeadCell>
              <HeadCell $pad={6}>
                <IconSlot><ShyIcon /></IconSlot>
                <IconSlot><SunIcon /></IconSlot>
                <IconSlot><StairIcon /></IconSlot>
                <IconSlot $fx><Fx>fx</Fx></IconSlot>
                <IconSlot><FilmIcon /></IconSlot>
                <IconSlot><BlurIcon /></IconSlot>
                <IconSlot><AdjustIcon /></IconSlot>
                <IconSlot><CubeIcon /></IconSlot>
              </HeadCell>
              <HeadCell>Parent &amp; Link</HeadCell>
              <HeadCell />
            </HeadRow>
          </thead>
          <tbody>
            {layers.map((layer) => (
              <React.Fragment key={layer.n}>
                <Layer layer={layer} />
                {layer.props?.map((prop) => (
                  <LayerProp key={prop.name} prop={prop} />
                ))}
              </React.Fragment>
            ))}
          </tbody>
        </LayerTable>
      </LayerPane>
      <TrackPane>
        <Navigator>
          <Handle />
          <NavigatorBar />
        </Navigator>
        <Ruler>
          <RulerMark>0:00s</RulerMark>
          <RulerMark>01s</RulerMark>
          <RulerMark>02s</RulerMark>
        </Ruler>
        <WorkArea>
          <Handle />
        </WorkArea>
        <CacheBar />
        <Tracks>
          {layers.map((layer) => (
            <React.Fragment key={layer.n}>
              <Track $color={TRACKS[layer.color]} />
              {layer.props?.map((prop) => (
                <Track key={prop.name}>
                  <IBeamIcon />
                </Track>
              ))}
            </React.Fragment>
          ))}
        </Tracks>
        <Playhead>
          <svg width="20" height="24" viewBox="0 0 20 24">
            <path d="M0 0h20v11l-8 13H8L0 11z" fill="#4a8fe0" />
            <path d="M7 15h6M10 15v9" stroke="#222" strokeWidth="2" />
          </svg>
        </Playhead>
      </TrackPane>
    </TimelineBody>
  </Panel>
);

const App = () => {
  return (
    <>
      <GlobalStyle />
      <Workspace>
        <EssentialGraphics />
        <RightColumn>
          <CompositionViewer />
          <Timeline />
        </RightColumn>
      </Workspace>
    </>
  );
};

export default App;
